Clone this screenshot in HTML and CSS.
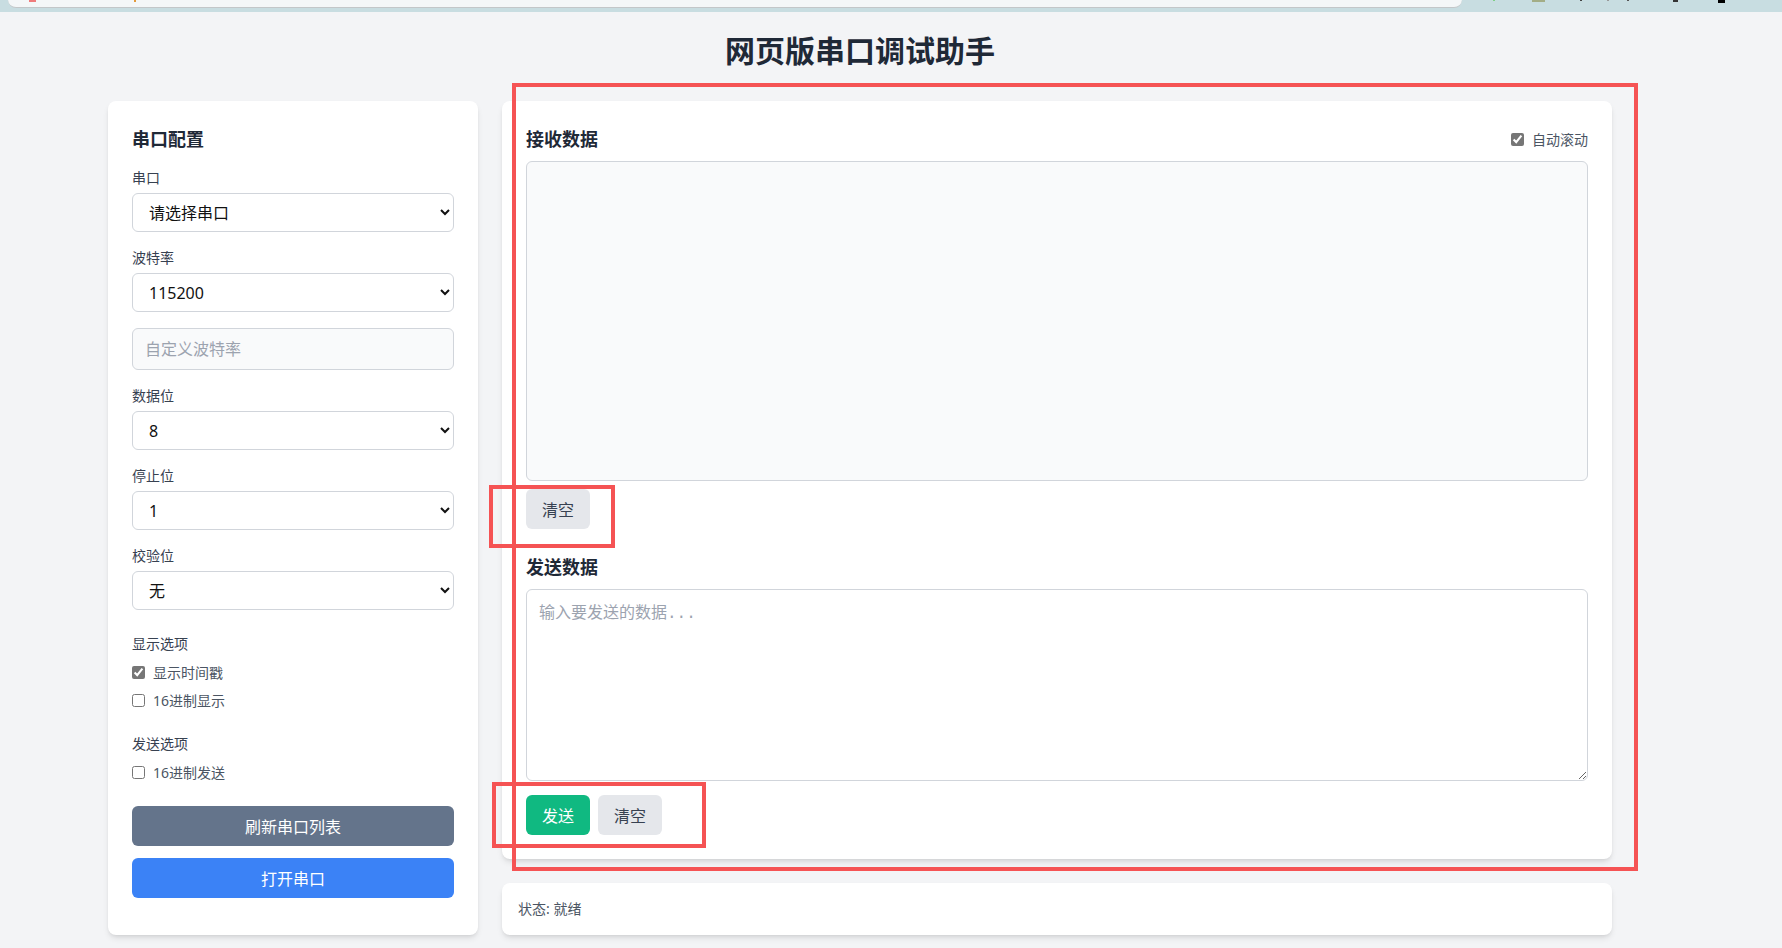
FILE: index.html
```html
<!DOCTYPE html>
<html lang="zh-CN">
<head>
    <meta charset="UTF-8">
    <meta name="viewport" content="width=device-width, initial-scale=1.0">
    <title>网页版串口调试助手</title>
    <link rel="stylesheet" href="styles.css">
</head>
<body>
    <!-- Browser window strip -->
    <div class="browser-bar">
        <div class="address-bar">
            <span class="tab-dot dot-red"></span>
            <span class="tab-dot dot-orange"></span>
        </div>
        <div class="toolbar">
            <span class="tool t-green"></span>
            <span class="tool t-olive"></span>
            <span class="tool t-dark"></span>
            <span class="tool t-grey"></span>
            <span class="tool t-dark2"></span>
            <span class="tool t-blob"></span>
            <span class="tool t-black"></span>
        </div>
    </div>

    <div class="page">
        <div class="container">
            <h1>网页版串口调试助手</h1>

            <div class="layout">
                <!-- Port settings -->
                <div class="card config">
                    <h2>串口配置</h2>

                    <div class="field">
                        <label for="portSelect">串口</label>
                        <select id="portSelect">
                            <option>请选择串口</option>
                        </select>
                    </div>

                    <div class="field">
                        <label for="baudRate">波特率</label>
                        <select id="baudRate">
                            <option>9600</option>
                            <option>19200</option>
                            <option>38400</option>
                            <option>57600</option>
                            <option selected>115200</option>
                        </select>
                    </div>

                    <div class="field">
                        <input type="text" id="customBaud" class="text-input" placeholder="自定义波特率">
                    </div>

                    <div class="field">
                        <label for="dataBits">数据位</label>
                        <select id="dataBits">
                            <option selected>8</option>
                            <option>7</option>
                            <option>6</option>
                            <option>5</option>
                        </select>
                    </div>

                    <div class="field">
                        <label for="stopBits">停止位</label>
                        <select id="stopBits">
                            <option selected>1</option>
                            <option>2</option>
                        </select>
                    </div>

                    <div class="field">
                        <label for="parity">校验位</label>
                        <select id="parity">
                            <option selected>无</option>
                            <option>奇校验</option>
                            <option>偶校验</option>
                        </select>
                    </div>

                    <div class="options">
                        <div class="options-title">显示选项</div>
                        <label class="check"><input type="checkbox" id="showTime" checked>显示时间戳</label>
                        <label class="check"><input type="checkbox" id="hexDisplay">16进制显示</label>
                    </div>

                    <div class="options">
                        <div class="options-title">发送选项</div>
                        <label class="check"><input type="checkbox" id="hexSend">16进制发送</label>
                    </div>

                    <div class="actions">
                        <button class="btn slate" id="refreshButton">刷新串口列表</button>
                        <button class="btn blue" id="connectButton">打开串口</button>
                    </div>
                </div>

                <!-- Receive / send -->
                <div class="main">
                    <div class="card">
                        <div class="panel-head">
                            <h2>接收数据</h2>
                            <label class="check"><input type="checkbox" id="autoScroll" checked>自动滚动</label>
                        </div>
                        <div class="receive" id="receiveBox"></div>
                        <div class="btn-row">
                            <button class="btn light" id="clearReceive">清空</button>
                        </div>

                        <h2 class="send-title">发送数据</h2>
                        <textarea id="sendInput" placeholder="输入要发送的数据..."></textarea>
                        <div class="btn-row send-row">
                            <button class="btn green" id="sendButton">发送</button>
                            <button class="btn light" id="clearSend">清空</button>
                        </div>
                    </div>

                    <div class="card status" id="statusBar">状态: 就绪</div>
                </div>
            </div>
        </div>
    </div>

    <!-- Highlight frames -->
    <div class="mark mark-main"></div>
    <div class="mark mark-clear"></div>
    <div class="mark mark-send"></div>

    <script>
        // Clear buttons
        const receiveBox = document.getElementById('receiveBox');
        const sendInput = document.getElementById('sendInput');

        document.getElementById('clearReceive').addEventListener('click', function () {
            receiveBox.textContent = '';
        });

        document.getElementById('clearSend').addEventListener('click', function () {
            sendInput.value = '';
        });
    </script>
</body>
</html>
```

FILE: styles.css
```css
body {
    margin: 0;
    background-color: #f3f4f6;
    color: #1f2937;
    font-family: "Noto Sans", "Noto Sans CJK SC", sans-serif;
    position: relative;
    min-height: 948px;
    overflow: hidden;
}

/* browser strip */
.browser-bar {
    height: 12px;
    background-color: #c8dde1;
    display: flex;
    align-items: flex-start;
}
.address-bar {
    margin-left: 8px;
    width: 1454px;
    height: 7px;
    background-color: #f4f7f8;
    border-bottom: 1px solid #c3c7c9;
    border-radius: 0 0 12px 12px;
    display: flex;
    align-items: flex-start;
}
.tab-dot {
    height: 2px;
}
.dot-red {
    width: 7px;
    margin-left: 21px;
    background-color: #ef7b7b;
}
.dot-orange {
    width: 2px;
    margin-left: 98px;
    background-color: #e39a3a;
}
.toolbar {
    display: flex;
    align-items: flex-start;
}
.tool {
    height: 1px;
}
.t-green {
    width: 2px;
    margin-left: 31px;
    background-color: #7fcf86;
}
.t-olive {
    width: 13px;
    height: 2px;
    margin-left: 37px;
    background-color: #a3ad86;
}
.t-dark {
    width: 2px;
    margin-left: 35px;
    background-color: #444;
}
.t-grey {
    width: 2px;
    margin-left: 25px;
    background-color: #999;
}
.t-dark2 {
    width: 2px;
    margin-left: 18px;
    background-color: #555;
}
.t-blob {
    width: 5px;
    height: 2px;
    margin-left: 44px;
    background-color: #333;
}
.t-black {
    width: 7px;
    height: 3px;
    margin-left: 40px;
    background-color: #000;
}

/* page */
.page {
    width: 1720px;
    padding-top: 21px;
}
.container {
    box-sizing: border-box;
    max-width: 1536px;
    margin: 0 auto;
    padding: 0 16px;
}
h1 {
    margin: 0 0 32px;
    text-align: center;
    font-size: 30px;
    line-height: 36px;
    font-weight: 700;
    color: #1f2937;
}
.layout {
    display: grid;
    grid-template-columns: 370px 1fr;
    gap: 24px;
}
.card {
    background-color: #fff;
    border-radius: 8px;
    padding: 24px;
    box-shadow: 0 4px 6px -1px rgba(0, 0, 0, 0.1), 0 2px 4px -2px rgba(0, 0, 0, 0.1);
}
h2 {
    margin: 0 0 15px;
    font-size: 18px;
    line-height: 28px;
    font-weight: 700;
    color: #1f2937;
}

/* settings form */
.field {
    margin-bottom: 16px;
}
.field label {
    display: block;
    font-size: 14px;
    line-height: 20px;
    margin-bottom: 5px;
    color: #374151;
}
select,
.text-input {
    display: block;
    width: 100%;
    box-sizing: border-box;
    height: 39px;
    border: 1px solid #d1d5db;
    border-radius: 6px;
    background-color: #fff;
    color: #111;
    font-family: inherit;
    font-size: 16px;
    padding: 0 12px;
    outline: none;
}
.text-input {
    height: 42px;
    background-color: #f9fafb;
}
.text-input::placeholder {
    color: #9ca3af;
}
.options {
    margin-top: 24px;
}
.options-title {
    font-size: 14px;
    line-height: 20px;
    color: #374151;
    margin-bottom: 8px;
}
.check {
    display: flex;
    align-items: center;
    gap: 8px;
    height: 20px;
    font-size: 14px;
    color: #4b5563;
    margin-bottom: 8px;
}
.check:last-child {
    margin-bottom: 0;
}
.check input {
    margin: 0;
    width: 13px;
    height: 13px;
    accent-color: #767676;
}
.actions {
    margin-top: 24px;
    display: flex;
    flex-direction: column;
    gap: 12px;
}

/* buttons */
.btn {
    height: 40px;
    padding: 0 16px;
    border: none;
    border-radius: 6px;
    font-family: inherit;
    font-size: 16px;
    color: #fff;
    cursor: pointer;
}
.slate {
    background-color: #64748b;
}
.blue {
    background-color: #3b82f6;
}
.green {
    background-color: #10b981;
}
.light {
    background-color: #e5e7eb;
    color: #374151;
}

/* data panels */
.main {
    display: flex;
    flex-direction: column;
    gap: 24px;
}
.panel-head {
    display: flex;
    justify-content: space-between;
    align-items: center;
    margin-bottom: 8px;
}
.panel-head h2 {
    margin: 0;
}
.panel-head .check {
    margin: 0;
}
.receive {
    height: 320px;
    box-sizing: border-box;
    border: 1px solid #d1d5db;
    border-radius: 6px;
    background-color: #f9fafb;
}
.btn-row {
    display: flex;
    gap: 8px;
    margin-top: 8px;
}
.send-title {
    margin: 24px 0 8px;
}
textarea {
    display: block;
    width: 100%;
    height: 192px;
    box-sizing: border-box;
    border: 1px solid #d1d5db;
    border-radius: 6px;
    padding: 12px;
    font-family: "Liberation Mono", "Noto Sans CJK SC", monospace;
    font-size: 16px;
    line-height: 24px;
    resize: vertical;
    outline: none;
}
textarea::placeholder {
    color: #9ca3af;
}
.send-row {
    margin-top: 14px;
}
.status {
    padding: 16px;
    font-size: 14px;
    line-height: 20px;
    color: #4b5563;
}

/* highlight frames */
.mark {
    position: absolute;
    box-sizing: border-box;
    border: 4px solid #f55354;
    pointer-events: none;
}
.mark-main {
    left: 512px;
    top: 83px;
    width: 1126px;
    height: 788px;
}
.mark-clear {
    left: 489px;
    top: 485px;
    width: 126px;
    height: 63px;
}
.mark-send {
    left: 492px;
    top: 782px;
    width: 214px;
    height: 66px;
}
```
